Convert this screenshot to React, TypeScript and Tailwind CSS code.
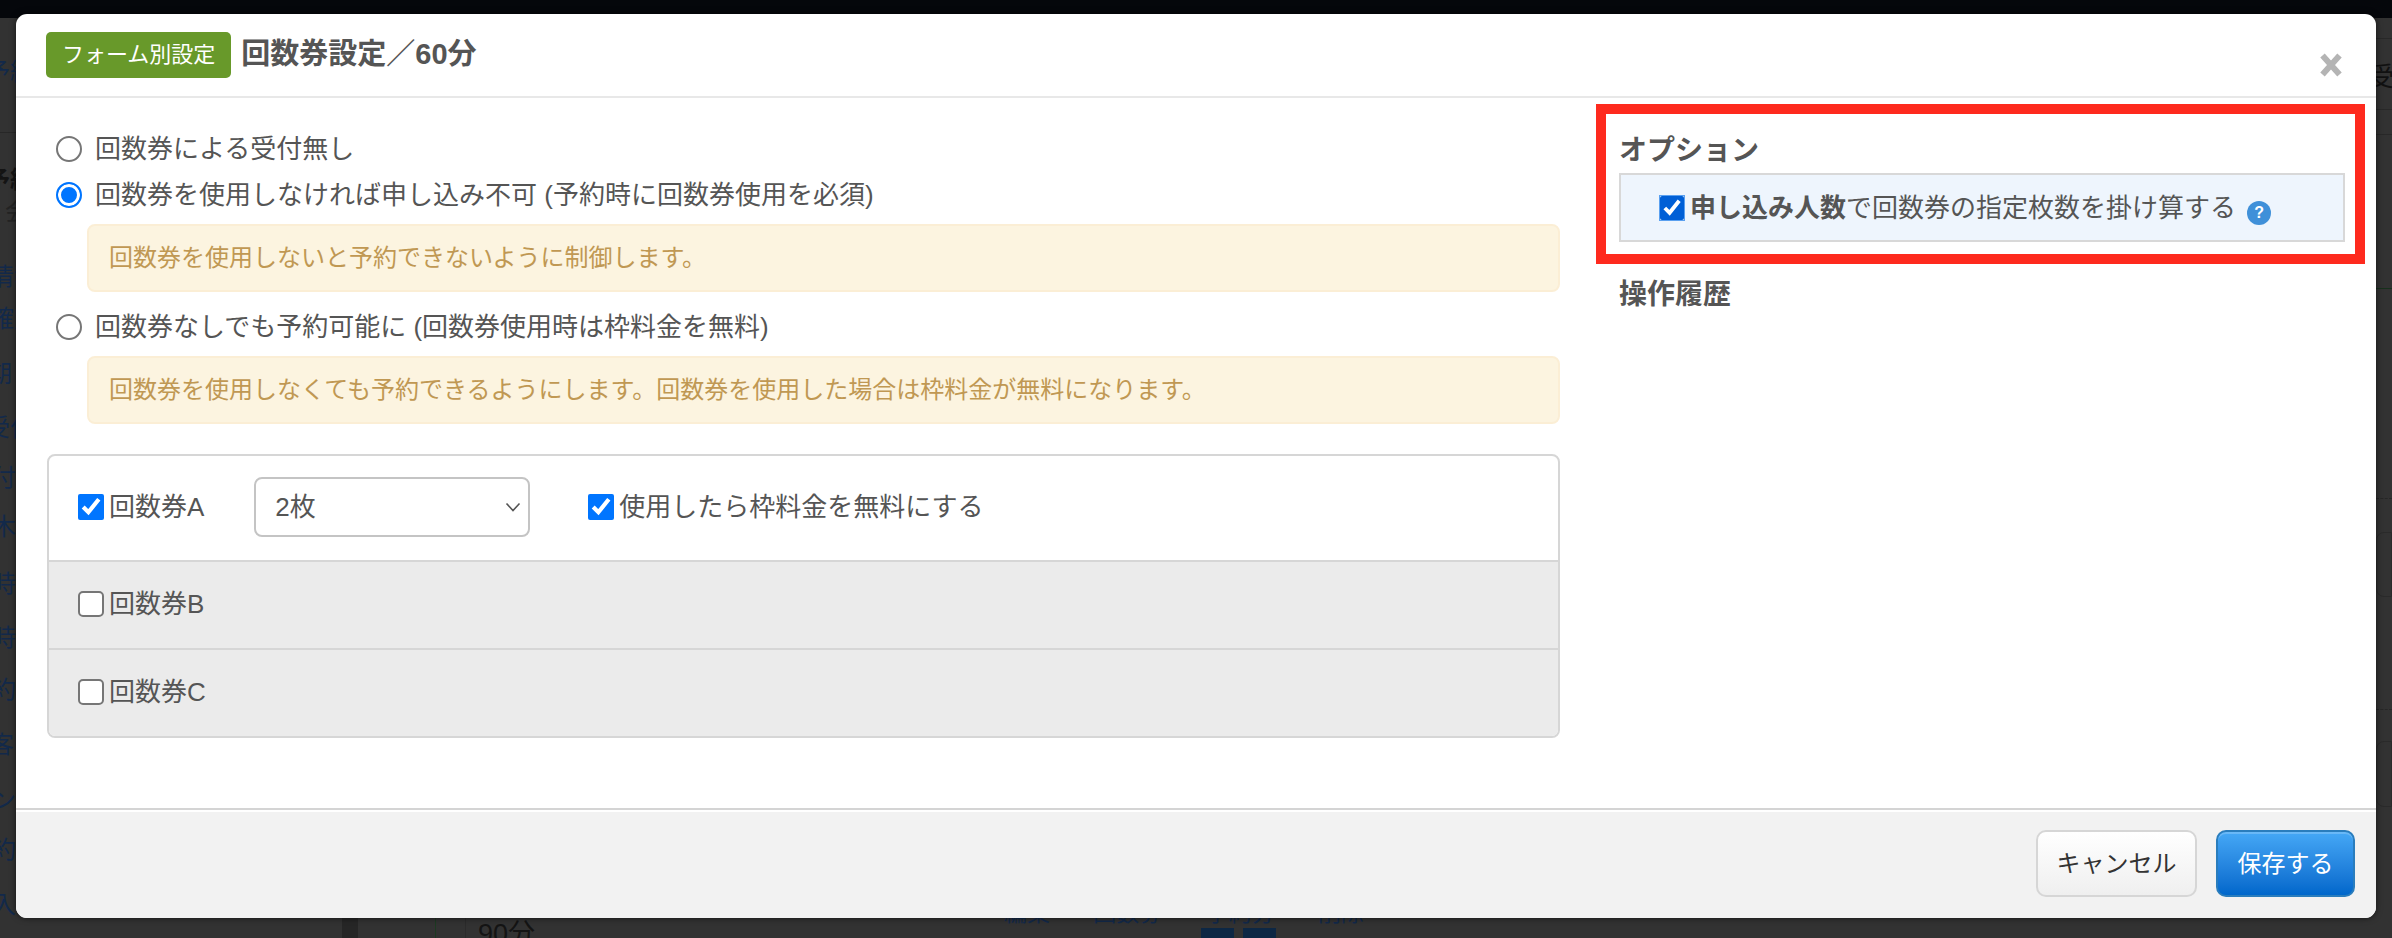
const font = "font-['Liberation_Sans','Noto_Sans_CJK_JP',sans-serif]";

const sideRows = [
  { text: "予約", cls: "mt-[42px] -ml-[14px] text-[#12294a]" },
  { text: "", cls: "mt-[48px] h-[1px] leading-[1px] bg-[#272727]" },
  { text: "予約", cls: "mt-[35px] -ml-[14px] font-bold text-[#141414]" },
  { text: "会", cls: "mt-[8px] ml-[5px] text-[#232323]" },
  { text: "情報", cls: "mt-[41px] -ml-[10px] text-[#12294a]" },
  { text: "確定", cls: "mt-[18px] -ml-[10px] text-[#12294a]" },
  { text: "期", cls: "mt-[31px] -ml-[12px] text-[#12294a]" },
  { text: "受付", cls: "mt-[30px] -ml-[14px] text-[#12294a]" },
  { text: "付", cls: "mt-[26px] -ml-[8px] text-[#12294a]" },
  { text: "木", cls: "mt-[25px] -ml-[8px] text-[#12294a]" },
  { text: "時", cls: "mt-[33px] -ml-[8px] text-[#12294a]" },
  { text: "時", cls: "mt-[30px] -ml-[8px] text-[#12294a]" },
  { text: "約", cls: "mt-[28px] -ml-[8px] text-[#12294a]" },
  { text: "客", cls: "mt-[31px] -ml-[10px] text-[#12294a]" },
  { text: "ン", cls: "mt-[31px] -ml-[8px] text-[#12294a]" },
  { text: "約", cls: "mt-[26px] -ml-[8px] text-[#12294a]" },
  { text: "入", cls: "mt-[31px] -ml-[8px] text-[#12294a]" },
];

const Notice = ({ children }: { children: string }) => (
  <div className="ml-[40px] mt-[6px] flex h-[68px] items-center rounded-[8px] border-2 border-[#fbeed5] bg-[#fcf4e0] pl-[20px] text-[24px] text-[#c09853]">
    {children}
  </div>
);

const RadioRow = ({ label, checked }: { label: string; checked?: boolean }) => (
  <label className="ml-[9px] flex h-[46px] items-center gap-[13px]">
    <input
      type="radio"
      name="ticket"
      defaultChecked={checked}
      className="m-0 h-[26px] w-[26px] appearance-none rounded-full border-2 border-[#767676] bg-white checked:border-[#0075ff] checked:bg-[#0075ff] checked:shadow-[inset_0_0_0_3px_white]"
    />
    <span>{label}</span>
  </label>
);

const TicketRow = ({ label }: { label: string }) => (
  <label className="flex items-center gap-[5px]">
    <input type="checkbox" className="m-0 h-[26px] w-[26px] appearance-none rounded-[5px] border-2 border-[#767676] bg-white" />
    <span>{label}</span>
  </label>
);

export default function App() {
  return (
    <div className={`relative flex h-[938px] w-full flex-col overflow-hidden bg-[#323232] ${font}`}>
      <div className="h-[18px] shrink-0 bg-[#05070b]" />

      {/* dimmed page behind the modal */}
      <div className="flex flex-1 justify-between">
        <div className="flex w-[40px] flex-col overflow-hidden text-[24px] leading-[24px]">
          {sideRows.map((r, i) => (
            <div key={i} className={`whitespace-nowrap ${r.cls}`}>
              {r.text}
            </div>
          ))}
        </div>

        <div className="flex flex-1 flex-col justify-end">
          <div className="flex h-[20px] overflow-hidden">
            <div className="ml-[302px] h-full w-[16px] bg-[#262626]" />
            <div className="h-full w-[78px] border-r border-[#1d3a22]" />
            <div className="h-full w-[30px] border-r border-[#2b2b2b]" />
            <div className="ml-[12px] w-[60px] pt-[3px] text-[27px] leading-[27px] text-[#141414]">90分</div>
            <div className="ml-[466px] -mt-[18px] flex w-[360px] shrink-0 justify-between whitespace-nowrap text-[23px] leading-[26px] text-[#12294a]">
              <span>編集</span>
              <span>回数券</span>
              <span>予約分</span>
              <span>削除</span>
            </div>
            <div className="-ml-[163px] mt-[10px] h-[10px] w-[33px] bg-[#0d2744]" />
            <div className="ml-[9px] mt-[10px] h-[10px] w-[33px] bg-[#0d2744]" />
          </div>
        </div>

        <div className="flex w-[16px] flex-col overflow-hidden text-[26px] leading-[26px] text-[#111]">
          <div className="mt-[20px] h-[1px] bg-[#282828]" />
          <div className="mt-[25px] -ml-[8px] whitespace-nowrap">受</div>
          <div className="mt-[19px] h-[1px] bg-[#282828]" />
          <div className="mt-[24px] h-[1px] bg-[#282828]" />
          <div className="mt-[153px] h-[1px] bg-[#17301c]" />
          <div className="mt-[209px] border-t border-dashed border-[#262626]" />
          <div className="mt-[33px] h-[65px] rounded-l-[8px] border border-[#2a2a2a]" />
          <div className="mt-[112px] border-t border-dashed border-[#262626]" />
          <div className="mt-[31px] h-[66px] rounded-l-[8px] border border-[#2a2a2a]" />
        </div>
      </div>

      {/* modal */}
      <div className="absolute left-[16px] top-[14px] flex h-[904px] w-[2360px] flex-col overflow-hidden rounded-[11px] bg-white text-[26px] leading-[36px] text-[#555] shadow-[0_0_6px_rgba(0,0,0,0.6)]">
        <div className="relative flex h-[84px] shrink-0 items-center border-b-2 border-[#e8e8e8] pl-[30px]">
          <span className="flex h-[46px] items-center rounded-[5px] bg-[#68992a] px-[16px] text-[22px] text-white">
            フォーム別設定
          </span>
          <h3 className="ml-[10px] -mt-[2px] text-[29px] font-bold text-[#555]">回数券設定／60分</h3>
          <svg className="absolute right-[33px] top-[39px] h-[24px] w-[24px]" viewBox="0 0 24 24" fill="none">
            <path d="M3.5 2.5 L20.5 21.5 M20.5 2.5 L3.5 21.5" stroke="#b4b4b4" strokeWidth="6" />
          </svg>
        </div>

        <div className="flex flex-1">
          <div className="ml-[31px] w-[1513px] shrink-0 pt-[28px]">
            <RadioRow label="回数券による受付無し" />
            <RadioRow label="回数券を使用しなければ申し込み不可 (予約時に回数券使用を必須)" checked />
            <Notice>回数券を使用しないと予約できないように制御します。</Notice>
            <div className="mt-[12px]">
              <RadioRow label="回数券なしでも予約可能に (回数券使用時は枠料金を無料)" />
            </div>
            <Notice>回数券を使用しなくても予約できるようにします。回数券を使用した場合は枠料金が無料になります。</Notice>

            <div className="mt-[30px] overflow-hidden rounded-[8px] border-2 border-[#d6d6d6]">
              <div className="flex h-[106px] items-center border-b-2 border-[#d6d6d6] pb-[3px] pl-[29px]">
                <label className="flex items-center gap-[5px]">
                  <input type="checkbox" defaultChecked className="m-0 h-[26px] w-[26px] accent-[#0075ff]" />
                  <span>回数券A</span>
                </label>
                <div className="relative ml-[50px] h-[60px] w-[276px]">
                  <select className="h-full w-full appearance-none rounded-[8px] border-2 border-[#c4c4c4] bg-white pl-[19px] text-[26px] text-[#555] outline-none">
                    <option>2枚</option>
                  </select>
                  <svg className="absolute right-[9px] top-[25px] h-[10px] w-[16px]" viewBox="0 0 16 10" fill="none">
                    <path d="M1.5 1.5 L8 8.5 L14.5 1.5" stroke="#555" strokeWidth="1.6" />
                  </svg>
                </div>
                <label className="ml-[58px] flex items-center gap-[5px]">
                  <input type="checkbox" defaultChecked className="m-0 h-[26px] w-[26px] accent-[#0075ff]" />
                  <span>使用したら枠料金を無料にする</span>
                </label>
              </div>
              <div className="flex h-[88px] items-center border-b-2 border-[#d6d6d6] bg-[#ebebeb] pb-[3px] pl-[29px]">
                <TicketRow label="回数券B" />
              </div>
              <div className="flex h-[86px] items-center bg-[#ebebeb] pb-[3px] pl-[29px]">
                <TicketRow label="回数券C" />
              </div>
            </div>
          </div>

          <div className="relative ml-[59px] w-[726px] pt-[33px]">
            <div className="absolute -left-[23px] top-[6px] h-[160px] w-[769px] border-[10px] border-[#fe2a1e]" />
            <h4 className="h-[40px] text-[28px] font-bold leading-[40px] text-[#555]">オプション</h4>
            <div className="mt-[2px] flex h-[69px] items-center border-2 border-[#d8d8d8] bg-[#eef5fd] pl-[39px]">
              <input
                type="checkbox"
                defaultChecked
                className="m-0 h-[24px] w-[24px] accent-[#005fd6] outline outline-1 outline-offset-0 outline-[#5aa0f0]"
              />
              <span className="ml-[6px]">
                <b className="font-bold">申し込み人数</b>で回数券の指定枚数を掛け算する
              </span>
              <span className="ml-[11px] mt-[10px] flex h-[24px] w-[24px] items-center justify-center rounded-full bg-[#3f90d9] text-[16px] font-bold leading-[24px] text-white">
                ?
              </span>
            </div>
            <h4 className="mt-[33px] h-[40px] text-[28px] font-bold leading-[40px] text-[#555]">操作履歴</h4>
          </div>
        </div>

        <div className="shrink-0 border-t-2 border-[#d4d4d4]">
          <div className="flex h-[108px] justify-end gap-[19px] border-t-2 border-white bg-[#f2f2f2] pr-[21px] pt-[18px]">
            <button className="h-[67px] w-[161px] rounded-[10px] border-2 border-[#d6d6d6] bg-gradient-to-b from-white to-[#efefef] text-[24px] text-[#333]">
              キャンセル
            </button>
            <button className="h-[67px] w-[139px] rounded-[10px] border-2 border-[#2a7dbd] bg-gradient-to-b from-[#45a8f6] to-[#0067cb] text-[24px] text-white shadow-[inset_0_2px_0_rgba(255,255,255,0.2)]">
              保存する
            </button>
          </div>
        </div>
      </div>
    </div>
  );
}
